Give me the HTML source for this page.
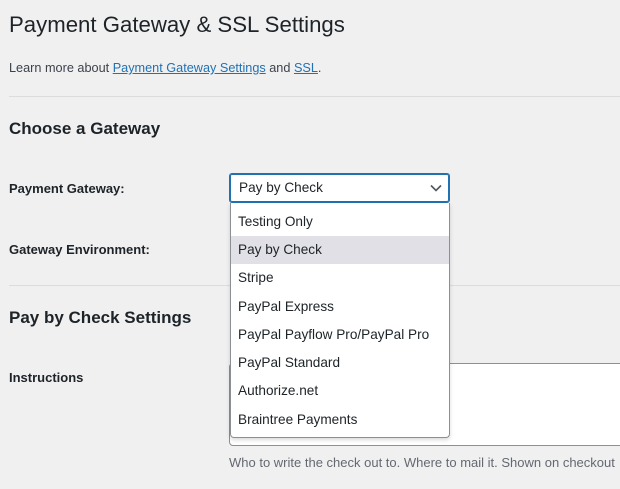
<!DOCTYPE html>
<html><head><style>
body{margin:0;width:620px;height:489px;overflow:hidden;background:#f0f0f1;font-family:"Liberation Sans",sans-serif;color:#1d2327;position:relative}
.a{position:absolute;white-space:nowrap}
h1{position:absolute;left:9px;top:12px;margin:0;font-size:22.2px;font-weight:400}
a{color:#2271b1;text-decoration:underline}
.hr{position:absolute;left:9px;right:0;height:1px;background:#dcdcde}
h2{position:absolute;left:9px;margin:0;font-size:17px;font-weight:600}
.lbl{position:absolute;left:9px;font-size:13px;font-weight:600}
.sel{position:absolute;left:229px;top:173px;width:219px;height:28px;border:1px solid #2271b1;border-radius:3px;background:#fff;box-shadow:0 0 0 1px #2271b1 inset}
.dd{position:absolute;left:230px;top:203px;width:218px;height:234px;border:1px solid #8c8f94;border-top:none;border-radius:0 0 4px 4px;background:#fff;box-shadow:0 2px 4px rgba(0,0,0,.15)}
.it{height:28.3px;line-height:28px;padding-left:7px;font-size:13.6px;color:#1d2327}
.ta{position:absolute;left:229px;top:363px;width:400px;height:81px;border:1px solid #8c8f94;border-radius:4px;background:#fff}
</style></head><body>
<h1>Payment Gateway &amp; SSL Settings</h1>
<div class="a" style="left:9px;top:61px;font-size:12.7px;color:#3c434a">Learn more about <a>Payment Gateway Settings</a> and <a>SSL</a>.</div>
<div class="hr" style="top:96px"></div>
<h2 style="top:119px">Choose a Gateway</h2>
<div class="lbl" style="top:181px">Payment Gateway:</div>
<div class="lbl" style="top:242px">Gateway Environment:</div>
<div class="hr" style="top:285px"></div>
<h2 style="top:308px">Pay by Check Settings</h2>
<div class="lbl" style="top:370px">Instructions</div>
<div class="ta"></div>
<div class="a" style="left:229px;top:455px;font-size:13px;color:#646970">Who to write the check out to. Where to mail it. Shown on checkout</div>
<div class="sel"><span class="a" style="left:9px;top:6px;font-size:13.6px">Pay by Check</span>
<svg class="a" style="left:200px;top:10px" width="12" height="8" viewBox="0 0 12 8"><path d="M1 1.5l5 5 5-5" fill="none" stroke="#50575e" stroke-width="1.6"/></svg></div>
<div class="dd">
<div class="it" style="line-height:1;padding-top:12px;box-sizing:border-box;height:33px">Testing Only</div>
<div class="it" style="background:#e0e0e6">Pay by Check</div>
<div class="it">Stripe</div>
<div class="it">PayPal Express</div>
<div class="it">PayPal Payflow Pro/PayPal Pro</div>
<div class="it">PayPal Standard</div>
<div class="it">Authorize.net</div>
<div class="it">Braintree Payments</div>
</div>
</body></html>
